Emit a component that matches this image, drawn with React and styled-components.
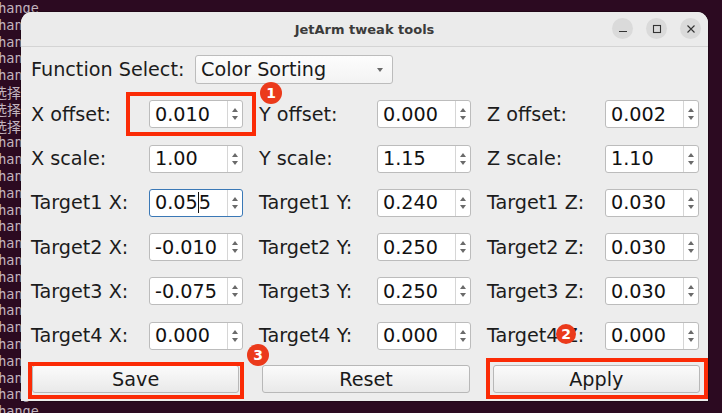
import React from 'react';
import styled, { createGlobalStyle } from 'styled-components';

const GlobalStyle = createGlobalStyle`
  html, body { margin: 0; padding: 0; }
  body {
    width: 722px;
    height: 413px;
    overflow: hidden;
    background: #2c0a21;
    font-family: "DejaVu Sans", "Liberation Sans", sans-serif;
  }
`;

const Desktop = styled.div`
  position: relative;
  width: 722px;
  height: 413px;
  overflow: hidden;
`;

const Terminal = styled.div`
  font-family: "DejaVu Sans Mono", "Liberation Mono", monospace;
  font-size: 13.5px;
  line-height: 16.8px;
  color: #c2b4be;
  white-space: pre;
`;

const TermLine = styled.div`
  margin-left: ${p => (p.$cjk ? '-7px' : '-10px')};
  font-family: ${p => (p.$cjk ? '"Noto Sans CJK SC", sans-serif' : 'inherit')};
  font-size: ${p => (p.$cjk ? '14px' : '13.5px')};
`;

const Window = styled.div`
  position: absolute;
  left: 21px;
  top: 12px;
  width: 687px;
  height: 389px;
  background: #ededed;
  border-radius: 11px 11px 0 0;
  display: flex;
  flex-direction: column;
  overflow: hidden;
  box-shadow: 0 0 0 1px rgba(0, 0, 0, 0.25);
`;

const TitleBar = styled.div`
  position: relative;
  height: 34px;
  flex-shrink: 0;
  display: flex;
  align-items: center;
  justify-content: center;
  background: #ebebeb;
  border-bottom: 1px solid #d4d4d4;
`;

const Title = styled.div`
  font-size: 13px;
  font-weight: bold;
  color: #3b3b3b;
`;

const Controls = styled.div`
  position: absolute;
  right: 7px;
  top: 6px;
  display: flex;
  gap: 13px;
`;

const CtrlButton = styled.div`
  width: 21px;
  height: 21px;
  border-radius: 50%;
  background: #dadada;
  display: flex;
  align-items: center;
  justify-content: center;
`;

const Body = styled.div`
  padding: 8px 8px 0 10px;
  display: flex;
  flex-direction: column;
  gap: 16.3px;
`;

const Row = styled.div`
  display: flex;
  align-items: center;
  gap: 16px;
  height: ${p => p.$h || 28}px;
`;

const Field = styled.div`
  display: flex;
  align-items: center;
  width: 212px;
`;

const Label = styled.div`
  width: ${p => p.$w || 118}px;
  flex-shrink: 0;
  font-size: 19.2px;
  color: #1c1c1c;
  white-space: nowrap;
`;

const Combo = styled.div`
  width: 198px;
  height: 29px;
  box-sizing: border-box;
  border: 1px solid #bcbcbc;
  border-radius: 3px;
  background: linear-gradient(#fdfdfd, #f3f3f3);
  display: flex;
  align-items: center;
  justify-content: space-between;
  padding: 0 9px 0 5px;
  font-size: 19.2px;
  color: #1a1a1a;
`;

const SpinBox = styled.div`
  width: 94px;
  height: 28px;
  box-sizing: border-box;
  border: 1px solid ${p => (p.$focus ? '#3a78b6' : '#bcbcbc')};
  border-radius: 3px;
  background: #fff;
  display: flex;
`;

const Value = styled.div`
  flex: 1;
  display: flex;
  align-items: center;
  padding-left: 5px;
  font-size: 19.2px;
  color: #111;
`;

const Caret = styled.span`
  display: inline-block;
  width: 1px;
  height: 21px;
  background: #111;
`;

const Arrows = styled.div`
  width: 14px;
  border-left: 1px solid #d6d6d6;
  display: flex;
  flex-direction: column;
  align-items: center;
  justify-content: center;
  gap: 4px;
`;

const Tri = styled.div`
  width: 0;
  height: 0;
  border-left: 3px solid transparent;
  border-right: 3px solid transparent;
  ${p => (p.$up ? 'border-bottom: 4px solid #6a6a6a;' : 'border-top: 4px solid #6a6a6a;')}
`;

const ButtonRow = styled.div`
  display: grid;
  grid-template-columns: repeat(3, 1fr);
  column-gap: 23px;
  margin: -1px 0 0 1px;
`;

const Button = styled.div`
  height: 28px;
  box-sizing: border-box;
  border: 1px solid #b8b8b8;
  border-radius: 3px;
  background: linear-gradient(#fbfbfb, #e9e9e9);
  display: flex;
  align-items: center;
  justify-content: center;
  font-size: 19.2px;
  color: #1a1a1a;
`;

const RedBox = styled.div`
  position: absolute;
  left: ${p => p.$x}px;
  top: ${p => p.$y}px;
  width: ${p => p.$w}px;
  height: ${p => p.$h}px;
  box-sizing: border-box;
  border: 4px solid #fb2b06;
  pointer-events: none;
`;

const Badge = styled.div`
  position: absolute;
  left: ${p => p.$x - p.$d / 2}px;
  top: ${p => p.$y - p.$d / 2}px;
  width: ${p => p.$d}px;
  height: ${p => p.$d}px;
  border-radius: 50%;
  background: #eb3a1b;
  color: #fff;
  font-family: "DejaVu Sans", sans-serif;
  font-weight: bold;
  font-size: 14px;
  display: flex;
  align-items: center;
  justify-content: center;
`;

const Spin = ({ value, focus }) => (
  <SpinBox $focus={focus}>
    <Value>
      {focus ? (
        <>
          {value.slice(0, 4)}
          <Caret />
          {value.slice(4)}
        </>
      ) : value}
    </Value>
    <Arrows>
      <Tri $up />
      <Tri />
    </Arrows>
  </SpinBox>
);

const rows = [
  [['X offset:', '0.010'], ['Y offset:', '0.000'], ['Z offset:', '0.002']],
  [['X scale:', '1.00'], ['Y scale:', '1.15'], ['Z scale:', '1.10']],
  [['Target1 X:', '0.055', true], ['Target1 Y:', '0.240'], ['Target1 Z:', '0.030']],
  [['Target2 X:', '-0.010'], ['Target2 Y:', '0.250'], ['Target2 Z:', '0.030']],
  [['Target3 X:', '-0.075'], ['Target3 Y:', '0.250'], ['Target3 Z:', '0.030']],
  [['Target4 X:', '0.000'], ['Target4 Y:', '0.000'], ['Target4 Z:', '0.000']],
];

const termLines = Array.from({ length: 25 }, (_, i) => (i >= 5 && i <= 7 ? 'cjk' : 'change'));

export default function App() {
  return (
    <>
      <GlobalStyle />
      <Desktop>
        <Terminal>
          {termLines.map((t, i) =>
            t === 'cjk'
              ? <TermLine key={i} $cjk>选择</TermLine>
              : <TermLine key={i}>change</TermLine>
          )}
        </Terminal>

        <Window>
          <TitleBar>
            <Title>JetArm tweak tools</Title>
            <Controls>
              <CtrlButton>
                <svg width="10" height="10" viewBox="0 0 10 10">
                  <line x1="1" y1="7.5" x2="9" y2="7.5" stroke="#333" strokeWidth="1.2" />
                </svg>
              </CtrlButton>
              <CtrlButton>
                <svg width="10" height="10" viewBox="0 0 10 10">
                  <rect x="1.5" y="1.5" width="7" height="7" fill="none" stroke="#333" strokeWidth="1.1" />
                </svg>
              </CtrlButton>
              <CtrlButton>
                <svg width="10" height="10" viewBox="0 0 10 10">
                  <path d="M1.5 1.5 L8.5 8.5 M8.5 1.5 L1.5 8.5" stroke="#333" strokeWidth="1.1" />
                </svg>
              </CtrlButton>
            </Controls>
          </TitleBar>

          <Body>
            <Row $h={29}>
              <Label $w={148}>Function Select:</Label>
              <Combo>
                <span>Color Sorting</span>
                <Tri />
              </Combo>
            </Row>
            {rows.map((r, i) => (
              <Row key={i}>
                {r.map(([label, value, focus]) => (
                  <Field key={label}>
                    <Label>{label}</Label>
                    <Spin value={value} focus={focus} />
                  </Field>
                ))}
              </Row>
            ))}
            <ButtonRow>
              <Button>Save</Button>
              <Button>Reset</Button>
              <Button>Apply</Button>
            </ButtonRow>
          </Body>
        </Window>

        <RedBox $x={126} $y={92} $w={130} $h={44} />
        <RedBox $x={28} $y={362} $w={216} $h={37} />
        <RedBox $x={486} $y={358} $w={222} $h={41} />
        <Badge $x={271} $y={93} $d={22}>1</Badge>
        <Badge $x={566} $y={334} $d={20}>2</Badge>
        <Badge $x={258} $y={355} $d={22}>3</Badge>
      </Desktop>
    </>
  );
}
